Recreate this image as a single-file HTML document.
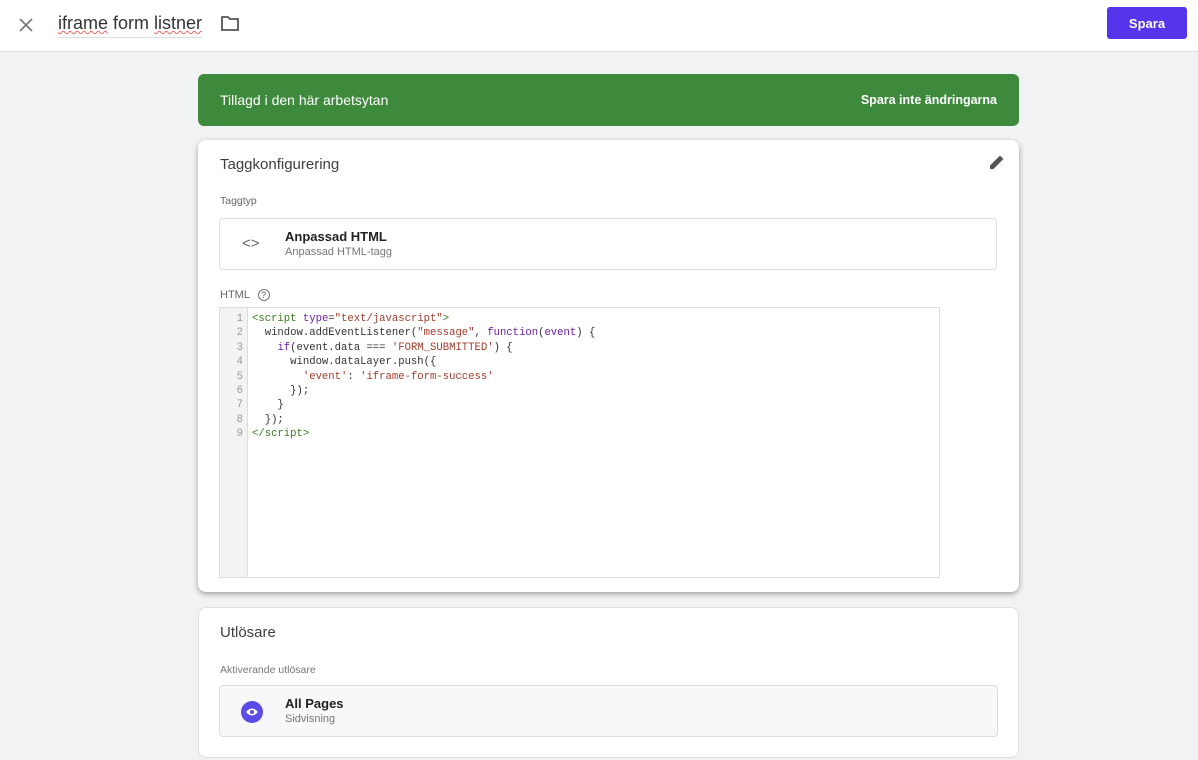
<!DOCTYPE html>
<html><head><meta charset="utf-8"><style>
*{box-sizing:border-box;margin:0;padding:0}
body{width:1198px;height:760px;background:#f1f2f4;font-family:"Liberation Sans",sans-serif;position:relative;overflow:hidden;color:#202124}
.hdr{position:absolute;left:0;top:0;width:1198px;height:52px;background:#fff;border-bottom:1px solid #dcdde0}
.abs{position:absolute}
.card{position:absolute;left:198px;width:821px;background:#fff;border-radius:8px}
.code{font-family:"Liberation Mono",monospace;font-size:10.6px;line-height:14.4px;white-space:pre}
</style></head><body>
<div class="hdr">
<svg class="abs" style="left:18px;top:17px" width="16" height="16" viewBox="0 0 16 16"><path d="M2 2L14 14M14 2L2 14" stroke="#777" stroke-width="1.6"/></svg>
<div class="abs" style="left:58px;top:13px;font-size:18px;color:#333;border-bottom:1px solid #ddd;padding-bottom:3px"><span style="text-decoration:underline wavy #e66;text-decoration-thickness:1px">iframe</span> form <span style="text-decoration:underline wavy #e66;text-decoration-thickness:1px">listner</span></div>
<svg class="abs" style="left:220px;top:15px" width="20" height="17" viewBox="0 0 20 17"><path d="M2 2h6l2 2h8v11H2z" fill="none" stroke="#555" stroke-width="1.8"/></svg>
<div class="abs" style="left:1107px;top:7px;width:80px;height:32px;background:#5534ec;border-radius:3px;color:#fff;font-weight:bold;font-size:13px;text-align:center;line-height:34px">Spara</div>
</div>
<div class="abs" style="left:198px;top:74px;width:821px;height:52px;background:#3d8a3d;border-radius:6px;color:#fff;font-size:14px;line-height:52px;padding-left:22px">Tillagd i den här arbetsytan<span style="position:absolute;right:22px;font-size:12.5px;font-weight:bold">Spara inte ändringarna</span></div>
<div class="card" style="top:140px;height:452px;box-shadow:0 2px 6px rgba(0,0,0,.35)">
<div class="abs" style="left:22px;top:16px;font-size:15px;color:#3c4043">Taggkonfigurering</div>
<svg class="abs" style="left:790px;top:13px" width="18" height="18" viewBox="0 0 18 18"><path d="M2 16v-3.5L12 2.5l3.5 3.5L5.5 16z" fill="#555"/></svg>
<div class="abs" style="left:22px;top:55px;font-size:10.5px;color:#666">Taggtyp</div>
<div class="abs" style="left:21px;top:78px;width:778px;height:52px;border:1px solid #dcdde0;border-radius:4px">
<div class="abs" style="left:22px;top:16px;font-size:15px;color:#666">&lt;&gt;</div>
<div class="abs" style="left:65px;top:10px;font-size:13px;font-weight:bold;color:#222">Anpassad HTML</div>
<div class="abs" style="left:65px;top:27px;font-size:11px;color:#777">Anpassad HTML-tagg</div>
</div>
<div class="abs" style="left:22px;top:149px;font-size:11px;color:#666">HTML <span style="display:inline-block;width:12px;height:12px;border:1px solid #777;border-radius:50%;font-size:9px;text-align:center;line-height:11px;margin-left:5px">?</span></div>
<div class="abs" style="left:21px;top:167px;width:721px;height:271px;border:1px solid #ddd">
<div class="abs code" style="left:0;top:0;width:28px;height:269px;background:#f3f3f3;border-right:1px solid #ddd;text-align:right;padding-right:4px;color:#999;padding-top:4px">1
2
3
4
5
6
7
8
9</div>
<div class="abs code" style="left:32px;top:4px;color:#333"><span style="color:#3b7b1e">&lt;script</span> <span style="color:#6a1fa0">type</span>=<span style="color:#a13d2c">"text/javascript"</span><span style="color:#3b7b1e">&gt;</span>
  window.addEventListener(<span style="color:#a13d2c">"message"</span>, <span style="color:#6a1fa0">function</span>(<span style="color:#6a1fa0">event</span>) {
    <span style="color:#6a1fa0">if</span>(event.data === <span style="color:#a13d2c">'FORM_SUBMITTED'</span>) {
      window.dataLayer.push({
        <span style="color:#a13d2c">'event'</span>: <span style="color:#a13d2c">'iframe-form-success'</span>
      });
    }
  });
<span style="color:#3b7b1e">&lt;/script&gt;</span></div>
</div>
</div>
<div class="card" style="top:607px;height:151px;border:1px solid #e0e0e0">
<div class="abs" style="left:21px;top:16px;font-size:15px;color:#3c4043">Utlösare</div>
<div class="abs" style="left:21px;top:56px;font-size:10.5px;color:#777">Aktiverande utlösare</div>
<div class="abs" style="left:20px;top:77px;width:779px;height:52px;border:1px solid #dcdde0;border-radius:4px;background:#f8f8fa">
<div class="abs" style="left:21px;top:15px;width:22px;height:22px;border-radius:50%;background:#5b4be8"></div>
<svg class="abs" style="left:25px;top:21px" width="14" height="10" viewBox="0 0 14 10"><path d="M1 5Q7-2 13 5Q7 12 1 5z" fill="#fff"/><circle cx="7" cy="5" r="2" fill="#5b4be8"/></svg>
<div class="abs" style="left:65px;top:10px;font-size:13px;font-weight:bold;color:#222">All Pages</div>
<div class="abs" style="left:65px;top:27px;font-size:11px;color:#777">Sidvisning</div>
</div>
</div>
</body></html>
